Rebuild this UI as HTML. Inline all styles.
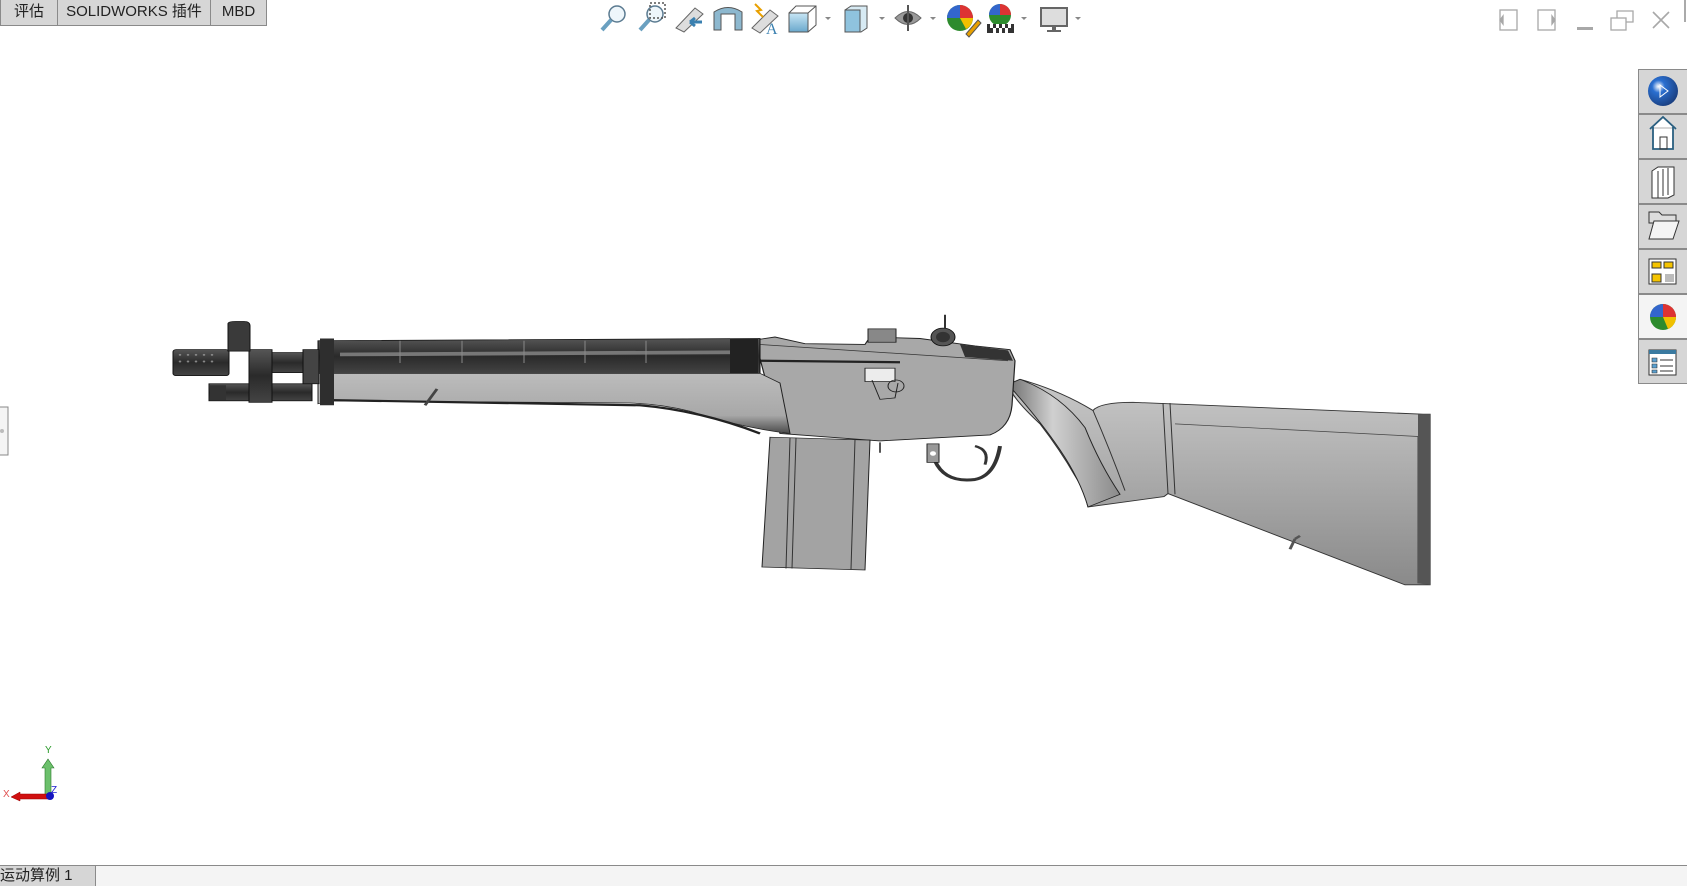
<!DOCTYPE html>
<html><head><meta charset="utf-8"><style>
*{margin:0;padding:0;box-sizing:border-box}
body{width:1687px;height:886px;background:#fff;position:relative;overflow:hidden;font-family:"Liberation Sans","Noto Sans CJK SC",sans-serif}
.tab{position:absolute;top:0;height:26px;background:#d6d6d6;border:1px solid #8a8a8a;border-top:none;font-size:15px;line-height:24px;text-align:center;color:#222}
.side{position:absolute;left:1638px;width:49px;height:45px;background:#d6d6d6;border:1px solid #8a8a8a;border-right:none}
</style></head><body>
<div class="tab" style="left:0;width:58px">评估</div>
<div class="tab" style="left:57px;width:154px">SOLIDWORKS 插件</div>
<div class="tab" style="left:210px;width:57px">MBD</div>

<svg style="position:absolute;left:0;top:0" width="1687" height="886">
<defs>
<linearGradient id="blue" x1="0" y1="0" x2="0" y2="1"><stop offset="0" stop-color="#c8e6f5"/><stop offset="1" stop-color="#6aa8cc"/></linearGradient>
<radialGradient id="ball" cx=".35" cy=".35" r=".7"><stop offset="0" stop-color="#fff"/><stop offset=".3" stop-color="#2a6fd0"/><stop offset="1" stop-color="#1a3f80"/></radialGradient>
<linearGradient id="stock" x1="0" y1="0" x2="0" y2="1"><stop offset="0" stop-color="#c8c8c8"/><stop offset=".5" stop-color="#a9a9a9"/><stop offset="1" stop-color="#8a8a8a"/></linearGradient>
<linearGradient id="fore" x1="0" y1="0" x2="0" y2="1"><stop offset="0" stop-color="#bcbcbc"/><stop offset=".7" stop-color="#a8a8a8"/><stop offset="1" stop-color="#4a4a4a"/></linearGradient>
<linearGradient id="dark" x1="0" y1="0" x2="0" y2="1"><stop offset="0" stop-color="#555"/><stop offset=".5" stop-color="#2a2a2a"/><stop offset="1" stop-color="#444"/></linearGradient>
<linearGradient id="wrist" x1="0" y1="0" x2="1" y2="0"><stop offset="0" stop-color="#6e6e6e"/><stop offset=".4" stop-color="#d0d0d0"/><stop offset="1" stop-color="#8a8a8a"/></linearGradient>
</defs>
<!-- toolbar icons -->
<g stroke="#5a7a90" stroke-width="1.5" fill="none">
<circle cx="617" cy="14" r="8" fill="#eef6fb"/><line x1="611" y1="20" x2="602" y2="30" stroke-width="4" stroke="#6aa0c0"/>
<circle cx="655" cy="14" r="8" fill="#eef6fb"/><rect x="650" y="3" width="15" height="15" stroke-dasharray="2 2" stroke="#555"/><line x1="649" y1="20" x2="640" y2="30" stroke-width="4" stroke="#6aa0c0"/>
</g>
<path d="M676 28 L695 8 L703 14 L684 32Z" fill="#ddd" stroke="#666"/><path d="M690 22 h12 M690 22 l5 -4 M690 22 l5 4" stroke="#3a80b0" stroke-width="3"/>
<path d="M714 12 Q728 3 742 12 V30 H735 V14 H721 V30 H714Z" fill="#8db8cf" stroke="#555"/>
<path d="M752 28 L770 10 L778 16 L760 33Z" fill="#ddd" stroke="#666"/><text x="766" y="34" font-size="16" fill="#3a80b0" font-family="Liberation Serif">A</text><path d="M755 4 l6 6 -4 1 6 6" stroke="#e8a000" stroke-width="2" fill="none"/>
<rect x="789" y="13" width="19" height="19" fill="url(#blue)" stroke="#555"/><path d="M789 13 l7 -7 h20 v19 l-8 7 M808 13 l8 -7" fill="none" stroke="#555"/>
<path d="M825 17 l3 3 3 -3Z" fill="#888"/>
<path d="M845 10 l6 -4 h16 v22 l-6 4 h-16Z" fill="#d7eaf3" stroke="#555"/><rect x="845" y="10" width="15" height="22" fill="#8fc3de" stroke="#555"/>
<path d="M879 17 l3 3 3 -3Z" fill="#888"/>
<path d="M895 18 Q908 5 921 18 Q908 31 895 18Z" fill="#999" stroke="#666"/><circle cx="908" cy="18" r="5" fill="#333"/><line x1="908" y1="5" x2="908" y2="31" stroke="#555" stroke-width="2"/>
<path d="M930 17 l3 3 3 -3Z" fill="#888"/>
<circle cx="960" cy="18" r="13" fill="#2d8b2d"/><path d="M960 18 L960 5 A13 13 0 0 1 973 18Z" fill="#d33"/><path d="M960 18 L960 5 A13 13 0 0 0 947 18Z" fill="#3366cc"/><path d="M960 18 L973 18 A13 13 0 0 1 966 29Z" fill="#f0c000"/><path d="M966 34 l12 -14 3 3 -12 14Z" fill="#e8a000" stroke="#555"/>
<circle cx="1000" cy="15" r="11" fill="#2d8b2d"/><path d="M1000 15 L1000 4 A11 11 0 0 1 1011 15Z" fill="#d33"/><path d="M1000 15 L1000 4 A11 11 0 0 0 989 15Z" fill="#3366cc"/><rect x="987" y="24" width="27" height="9" fill="#333"/><path d="M990 24h3v4h-3zM996 24h3v4h-3zM1002 24h3v4h-3zM1008 24h3v4h-3zM993 28h3v5h-3zM999 28h3v5h-3zM1005 28h3v5h-3z" fill="#fff"/>
<path d="M1021 17 l3 3 3 -3Z" fill="#888"/>
<rect x="1041" y="8" width="26" height="18" fill="#ddd" stroke="#666" stroke-width="2"/><rect x="1052" y="26" width="4" height="4" fill="#666"/><rect x="1047" y="30" width="14" height="2" fill="#666"/>
<path d="M1075 17 l3 3 3 -3Z" fill="#888"/>
<!-- window controls -->
<g stroke="#a8a8a8" stroke-width="1.3" fill="none">
<rect x="1500" y="10" width="17" height="20"/><path d="M1503 16 l-3 4 3 4Z" fill="#a8a8a8"/>
<rect x="1538" y="10" width="17" height="20"/><path d="M1552 16 l3 4 -3 4Z" fill="#a8a8a8"/>
<line x1="1577" y1="28.5" x2="1593" y2="28.5" stroke-width="3"/>
<rect x="1611" y="18" width="15" height="12"/><path d="M1617 18 v-7 h16 v11 h-7"/>
<path d="M1653 12 l16 16 M1669 12 l-16 16" stroke-width="1.6"/>
</g>
<line x1="1685" y1="0" x2="1685" y2="22" stroke="#555"/>
<!-- left tiny tab -->
<rect x="-1" y="407" width="9" height="48" fill="#f4f4f4" stroke="#888"/><circle cx="2" cy="431" r="2" fill="#bbb"/>

<!-- rifle -->
<g transform="translate(0,78.8) scale(1,0.742)">
<path d="M1093 447 Q1100 436 1133 436 L1423 452 L1430 452 L1430 682 L1405 682 L1168 559 L1164 563 L1088 577 Q1085 555 1075 535 Q1060 500 1040 465 Q1012 430 1008 412 L1020 405 Q1060 420 1093 447Z" fill="url(#stock)" stroke="#333" stroke-width="1.2"/>
<path d="M1020 405 Q1060 425 1085 470 Q1100 520 1120 560 L1088 577 Q1080 540 1060 500 Q1040 460 1008 412Z" fill="url(#wrist)" stroke="#222"/>
<path d="M1093 447 Q1110 500 1125 555" stroke="#333" fill="none"/>
<path d="M1163 437 L1168 559 M1170 437 L1175 560" stroke="#333" fill="none"/>
<path d="M1175 465 L1418 482 L1418 680" stroke="#444" fill="none"/>
<path d="M1418 452 L1430 452 L1430 682 L1418 680Z" fill="#555"/>
<path d="M1295 620 l-5 14 M1295 620 l5 -4" stroke="#555" stroke-width="3"/>
<path d="M755 352 L775 348 L805 357 L865 358 L870 348 L920 350 L975 360 L1010 365 L1015 380 L1012 440 Q1010 470 990 480 L880 488 L850 485 L780 478 Z" fill="#a8a8a8" stroke="#222" stroke-width="1.2"/>
<path d="M760 358 L1008 380" stroke="#333" fill="none"/>
<path d="M760 380 L900 382" stroke="#222" stroke-width="3"/>
<rect x="865" y="390" width="30" height="18" fill="#ececec" stroke="#222"/>
<path d="M872 406 L880 432 L895 430 L898 410" fill="none" stroke="#222"/>
<circle cx="896" cy="414" r="8" fill="none" stroke="#222"/>
<path d="M868 337 h28 v18 h-28z" fill="#888" stroke="#222"/>
<circle cx="943" cy="348" r="12" fill="#555" stroke="#111"/><circle cx="943" cy="348" r="7" fill="#333"/>
<path d="M945 336 v-18" stroke="#333" stroke-width="2"/>
<path d="M960 358 L1008 366 L1013 380 L965 375Z" fill="#333"/>
<path d="M318 353 L760 350 L760 397 L318 398Z" fill="url(#dark)" stroke="#111"/>
<path d="M340 369 L736 366 L736 371 L340 374Z" fill="#777"/>
<path d="M400 353 v30 M462 353 v30 M524 353 v30 M585 353 v30 M646 353 v30" stroke="#888"/>
<rect x="730" y="350" width="28" height="48" fill="#222"/>
<path d="M318 397 L760 397 L780 410 L790 478 Q740 470 690 448 Q660 438 630 437 L330 434 L318 438Z" fill="url(#fore)" stroke="#222"/>
<path d="M330 433 L640 440 Q700 447 760 478" stroke="#222" stroke-width="3" fill="none"/>
<path d="M320 350 h14 v90 h-14z" fill="#2e2e2e"/>
<path d="M770 483 L870 487 L865 662 L762 658Z" fill="#a3a3a3" stroke="#222"/>
<path d="M790 484 L786 660 M796 484 L792 660 M855 486 L851 661" stroke="#333" fill="none"/>
<path d="M935 495 L935 515 Q945 545 975 540 Q995 535 1000 495" fill="none" stroke="#333" stroke-width="4"/>
<path d="M927 492 h12 v25 h-12z" fill="#999" stroke="#222"/><circle cx="933" cy="505" r="3" fill="#fff"/>
<path d="M975 495 Q990 500 985 520" stroke="#333" stroke-width="3" fill="none"/>
<path d="M880 490 v14" stroke="#555" stroke-width="2"/>
<path d="M437 418 l-12 22" stroke="#444" stroke-width="3"/>
<rect x="272" y="369" width="46" height="27" fill="url(#dark)" stroke="#111"/>
<rect x="209" y="411" width="103" height="23" fill="url(#dark)" stroke="#111"/>
<rect x="210" y="413" width="16" height="20" fill="#333"/>
<rect x="249" y="365" width="23" height="71" fill="url(#dark)" stroke="#111"/>
<rect x="173" y="365" width="56" height="35" rx="3" fill="url(#dark)" stroke="#111"/>
<g fill="#888"><circle cx="180" cy="372" r="1.3"/><circle cx="188" cy="372" r="1.3"/><circle cx="196" cy="372" r="1.3"/><circle cx="204" cy="372" r="1.3"/><circle cx="212" cy="372" r="1.3"/><circle cx="180" cy="381" r="1.3"/><circle cx="188" cy="381" r="1.3"/><circle cx="196" cy="381" r="1.3"/><circle cx="204" cy="381" r="1.3"/><circle cx="212" cy="381" r="1.3"/></g>
<path d="M228 367 V330 Q228 327 236 327 L244 327 Q250 327 250 333 V367Z" fill="#3a3a3a" stroke="#111"/>
<rect x="303" y="365" width="16" height="46" fill="#444" stroke="#111"/>
</g>

<!-- triad -->
<path d="M45 795 V768 L42 768 L48 759 L54 768 L51 768 V795Z" fill="#6cc06c" stroke="#2a7a2a" stroke-width=".6"/>
<path d="M48 794 H20 V792 L11 797 L20 801 V799 H48Z" fill="#d01010" stroke="#900" stroke-width=".5"/>
<circle cx="50" cy="796" r="4" fill="#1515c0"/>
<text x="45" y="753" font-size="10" fill="#2a9a2a">Y</text>
<text x="3" y="797" font-size="10" fill="#e05050">X</text>
<text x="51" y="793" font-size="10" fill="#2020d0">Z</text>
</svg>

<div class="side" style="top:69px"></div>
<div class="side" style="top:114px"></div>
<div class="side" style="top:159px"></div>
<div class="side" style="top:204px"></div>
<div class="side" style="top:249px"></div>
<div class="side" style="top:294px;background:#f4f4f4"></div>
<div class="side" style="top:339px"></div>
<svg style="position:absolute;left:1638px;top:69px" width="49" height="315">
<circle cx="25" cy="22" r="15" fill="url(#ball)"/><path d="M22 16 l8 6 -8 6Z" fill="none" stroke="#fff"/>
<path d="M12 60 L25 48 L38 60 M15 58 V80 H35 V58" fill="#fff" stroke="#2a5f80" stroke-width="1.8"/><rect x="22" y="68" width="7" height="12" fill="none" stroke="#333"/>
<path d="M14 102 l6 -4 h16 v28 l-6 3 h-16Z" fill="#fff" stroke="#333"/><path d="M20 102 v27 M25 100 v27 M30 99 v27" stroke="#333"/>
<path d="M11 143 h10 l3 3 h14 v8 H11Z" fill="#ddd" stroke="#333"/><path d="M11 170 L16 152 H41 L35 170Z" fill="#f4f4f4" stroke="#333"/>
<rect x="11" y="190" width="27" height="25" fill="#fff" stroke="#333"/><rect x="14" y="193" width="9" height="6" fill="#f5c400" stroke="#333"/><rect x="26" y="193" width="9" height="6" fill="#f5c400" stroke="#333"/><rect x="14" y="205" width="9" height="8" fill="#f5c400" stroke="#333"/><rect x="27" y="205" width="9" height="8" fill="#bbb"/>
<circle cx="25" cy="248" r="13" fill="#2d8b2d"/><path d="M25 248 L25 235 A13 13 0 0 1 38 248Z" fill="#d33"/><path d="M25 248 L25 235 A13 13 0 0 0 12 248Z" fill="#3366cc"/><path d="M25 248 L38 248 A13 13 0 0 1 30 260Z" fill="#f0c000"/>
<rect x="11" y="281" width="27" height="25" fill="#fff" stroke="#333"/><rect x="11" y="281" width="27" height="4" fill="#3a7aa0"/><path d="M14 289 h5 v4 h-5z M14 295 h5 v4 h-5z M14 301 h5 v3 h-5z" fill="#5aa0d0" stroke="#333" stroke-width=".6"/><path d="M22 291 h13 M22 297 h13 M22 302 h13" stroke="#333"/>
</svg>

<div style="position:absolute;left:0;top:865px;width:1687px;height:21px;background:#f4f4f4;border-top:1px solid #8a8a8a"></div>
<div style="position:absolute;left:0;top:865px;width:96px;height:21px;background:#d6d6d6;border-top:1px solid #8a8a8a;border-right:1px solid #8a8a8a;font-size:15px;line-height:20px;color:#222">运动算例 1</div>
</body></html>
